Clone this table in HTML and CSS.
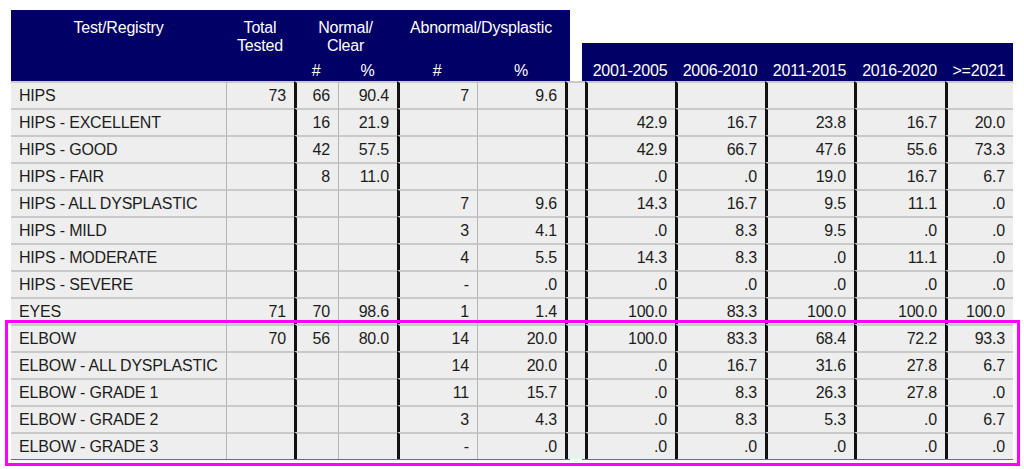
FILE: index.html
```html
<!DOCTYPE html>
<html lang="en">
<head>
<meta charset="utf-8">
<title>Test/Registry Results</title>
<link rel="stylesheet" href="styles.css">
</head>
<body>
<div class="page">
  <div class="tbl tbl-main" role="table">
    <div class="h h-first" role="columnheader">Test/Registry</div>
    <div class="h h-total" role="columnheader">Total<br>Tested</div>
    <div class="h h-normal" role="columnheader">Normal/<br>Clear</div>
    <div class="h h-abn" role="columnheader">Abnormal/Dysplastic</div>
    <div class="h h-gap"></div>
    <div class="h h-sub s3" role="columnheader">#</div>
    <div class="h h-sub s4" role="columnheader">%</div>
    <div class="h h-sub s5" role="columnheader">#</div>
    <div class="h h-sub s6" role="columnheader">%</div>

    <div class="c">HIPS</div><div class="c n tl">73</div><div class="c n kl">66</div><div class="c n tl">90.4</div><div class="c n kl">7</div><div class="c n tl">9.6</div><div class="c kl"></div>
    <div class="c">HIPS - EXCELLENT</div><div class="c n tl"></div><div class="c n kl">16</div><div class="c n tl">21.9</div><div class="c n kl"></div><div class="c n tl"></div><div class="c kl"></div>
    <div class="c">HIPS - GOOD</div><div class="c n tl"></div><div class="c n kl">42</div><div class="c n tl">57.5</div><div class="c n kl"></div><div class="c n tl"></div><div class="c kl"></div>
    <div class="c">HIPS - FAIR</div><div class="c n tl"></div><div class="c n kl">8</div><div class="c n tl">11.0</div><div class="c n kl"></div><div class="c n tl"></div><div class="c kl"></div>
    <div class="c">HIPS - ALL DYSPLASTIC</div><div class="c n tl"></div><div class="c n kl"></div><div class="c n tl"></div><div class="c n kl">7</div><div class="c n tl">9.6</div><div class="c kl"></div>
    <div class="c">HIPS - MILD</div><div class="c n tl"></div><div class="c n kl"></div><div class="c n tl"></div><div class="c n kl">3</div><div class="c n tl">4.1</div><div class="c kl"></div>
    <div class="c">HIPS - MODERATE</div><div class="c n tl"></div><div class="c n kl"></div><div class="c n tl"></div><div class="c n kl">4</div><div class="c n tl">5.5</div><div class="c kl"></div>
    <div class="c">HIPS - SEVERE</div><div class="c n tl"></div><div class="c n kl"></div><div class="c n tl"></div><div class="c n kl">-</div><div class="c n tl">.0</div><div class="c kl"></div>
    <div class="c">EYES</div><div class="c n tl">71</div><div class="c n kl">70</div><div class="c n tl">98.6</div><div class="c n kl">1</div><div class="c n tl">1.4</div><div class="c kl"></div>
    <div class="c">ELBOW</div><div class="c n tl">70</div><div class="c n kl">56</div><div class="c n tl">80.0</div><div class="c n kl">14</div><div class="c n tl">20.0</div><div class="c kl"></div>
    <div class="c">ELBOW - ALL DYSPLASTIC</div><div class="c n tl"></div><div class="c n kl"></div><div class="c n tl"></div><div class="c n kl">14</div><div class="c n tl">20.0</div><div class="c kl"></div>
    <div class="c">ELBOW - GRADE 1</div><div class="c n tl"></div><div class="c n kl"></div><div class="c n tl"></div><div class="c n kl">11</div><div class="c n tl">15.7</div><div class="c kl"></div>
    <div class="c">ELBOW - GRADE 2</div><div class="c n tl"></div><div class="c n kl"></div><div class="c n tl"></div><div class="c n kl">3</div><div class="c n tl">4.3</div><div class="c kl"></div>
    <div class="c">ELBOW - GRADE 3</div><div class="c n tl"></div><div class="c n kl"></div><div class="c n tl"></div><div class="c n kl">-</div><div class="c n tl">.0</div><div class="c kl"></div>
  </div>

  <div class="tbl tbl-years" role="table">
    <div class="h"></div>
    <div class="h h-year" role="columnheader">2001-2005</div>
    <div class="h h-year" role="columnheader">2006-2010</div>
    <div class="h h-year" role="columnheader">2011-2015</div>
    <div class="h h-year" role="columnheader">2016-2020</div>
    <div class="h h-year" role="columnheader">&gt;=2021</div>

    <div class="c"></div><div class="c n kl"></div><div class="c n kl"></div><div class="c n kl"></div><div class="c n kl"></div><div class="c n kl"></div>
    <div class="c"></div><div class="c n kl">42.9</div><div class="c n kl">16.7</div><div class="c n kl">23.8</div><div class="c n kl">16.7</div><div class="c n kl">20.0</div>
    <div class="c"></div><div class="c n kl">42.9</div><div class="c n kl">66.7</div><div class="c n kl">47.6</div><div class="c n kl">55.6</div><div class="c n kl">73.3</div>
    <div class="c"></div><div class="c n kl">.0</div><div class="c n kl">.0</div><div class="c n kl">19.0</div><div class="c n kl">16.7</div><div class="c n kl">6.7</div>
    <div class="c"></div><div class="c n kl">14.3</div><div class="c n kl">16.7</div><div class="c n kl">9.5</div><div class="c n kl">11.1</div><div class="c n kl">.0</div>
    <div class="c"></div><div class="c n kl">.0</div><div class="c n kl">8.3</div><div class="c n kl">9.5</div><div class="c n kl">.0</div><div class="c n kl">.0</div>
    <div class="c"></div><div class="c n kl">14.3</div><div class="c n kl">8.3</div><div class="c n kl">.0</div><div class="c n kl">11.1</div><div class="c n kl">.0</div>
    <div class="c"></div><div class="c n kl">.0</div><div class="c n kl">.0</div><div class="c n kl">.0</div><div class="c n kl">.0</div><div class="c n kl">.0</div>
    <div class="c"></div><div class="c n kl">100.0</div><div class="c n kl">83.3</div><div class="c n kl">100.0</div><div class="c n kl">100.0</div><div class="c n kl">100.0</div>
    <div class="c"></div><div class="c n kl">100.0</div><div class="c n kl">83.3</div><div class="c n kl">68.4</div><div class="c n kl">72.2</div><div class="c n kl">93.3</div>
    <div class="c"></div><div class="c n kl">.0</div><div class="c n kl">16.7</div><div class="c n kl">31.6</div><div class="c n kl">27.8</div><div class="c n kl">6.7</div>
    <div class="c"></div><div class="c n kl">.0</div><div class="c n kl">8.3</div><div class="c n kl">26.3</div><div class="c n kl">27.8</div><div class="c n kl">.0</div>
    <div class="c"></div><div class="c n kl">.0</div><div class="c n kl">8.3</div><div class="c n kl">5.3</div><div class="c n kl">.0</div><div class="c n kl">6.7</div>
    <div class="c"></div><div class="c n kl">.0</div><div class="c n kl">.0</div><div class="c n kl">.0</div><div class="c n kl">.0</div><div class="c n kl">.0</div>
  </div>

  <div class="highlight" aria-hidden="true"></div>
</div>
</body>
</html>
```

FILE: styles.css
```css
html, body {
  margin: 0;
  padding: 0;
  background: #ffffff;
}

body {
  font-family: "Liberation Sans", Arial, sans-serif;
  font-size: 16px;
  letter-spacing: -0.2px;
  line-height: 18px;
  color: #1c1c1c;
}

.page {
  position: relative;
  display: flex;
  align-items: flex-end;
  gap: 12px;
  padding: 10px 0 9px 11px;
  width: 1024px;
  height: 469px;
  box-sizing: border-box;
}

.tbl {
  display: grid;
  border-bottom: 1px solid #6666a8;
}

.tbl-main {
  grid-template-columns: 215px 68px 44px 59px 80px 88px 5px;
  grid-template-rows: 51px 20px repeat(14, 27px);
}

.tbl-years {
  grid-template-columns: 3px 90px 90px 89px 91px 68px;
  grid-template-rows: 38px repeat(14, 27px);
}

.h {
  background: #000066;
  color: #ffffff;
  text-align: center;
  box-sizing: border-box;
}

.h-first  { grid-column: 1; grid-row: 1 / span 2; padding-top: 9px; }
.h-total  { grid-column: 2; grid-row: 1 / span 2; padding-top: 9px; }
.h-normal { grid-column: 3 / span 2; grid-row: 1; padding-top: 9px; }
.h-abn    { grid-column: 5 / span 2; grid-row: 1; padding-top: 9px; }
.h-gap    { grid-column: 7; grid-row: 1 / span 2; }

.h-sub {
  grid-row: 2;
  display: flex;
  align-items: flex-end;
  justify-content: center;
  padding-bottom: 1px;
}
.s3 { grid-column: 3; }
.s4 { grid-column: 4; }
.s5 { grid-column: 5; }
.s6 { grid-column: 6; }

.h-year {
  display: flex;
  align-items: flex-end;
  justify-content: center;
  padding-bottom: 1px;
}

.c {
  background: #eeeeee;
  border-top: 2px solid #c9c9c9;
  box-sizing: border-box;
  display: flex;
  align-items: center;
  padding: 0 8px;
  white-space: nowrap;
  overflow: hidden;
}

.n {
  justify-content: flex-end;
}

.tl {
  border-left: 1px solid #b3b3b3;
}

.kl {
  border-left: 3px solid #111111;
}

.highlight {
  position: absolute;
  left: 5px;
  top: 320px;
  width: 1015px;
  height: 146px;
  border: 3px solid #ff00ff;
  box-sizing: border-box;
  pointer-events: none;
}
```
